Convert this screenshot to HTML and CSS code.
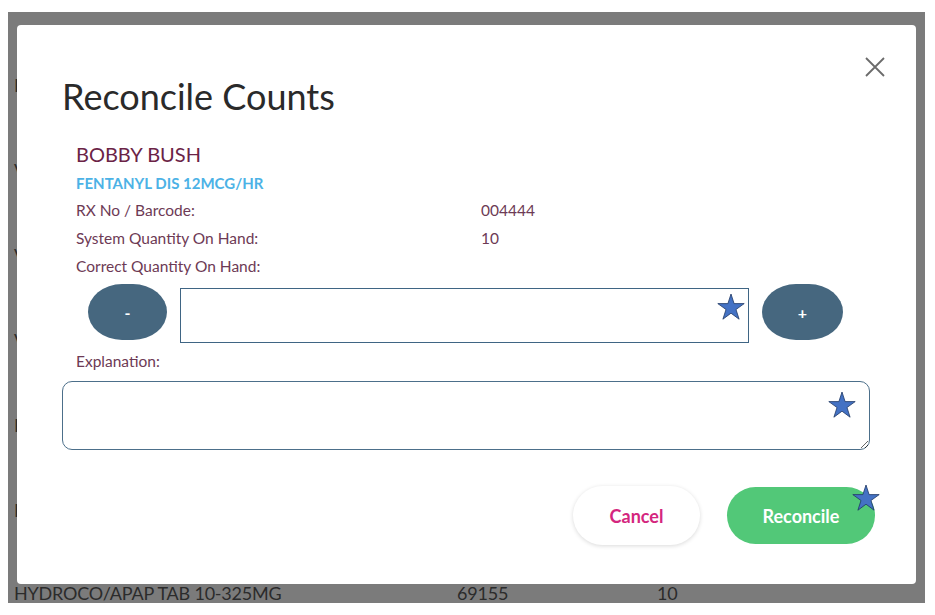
FILE: index.html
```html
<!DOCTYPE html>
<html>
<head>
  <meta charset="UTF-8">
  <title>Reconcile Counts</title>
  <link rel="stylesheet" href="styles.css">
</head>
<body>
  <div class="page">
    <div class="inventory-list">
      <div class="inventory-row"><span class="col-name">F</span></div>
      <div class="inventory-row"><span class="col-name">V</span></div>
      <div class="inventory-row"><span class="col-name">V</span></div>
      <div class="inventory-row"><span class="col-name">V</span></div>
      <div class="inventory-row"><span class="col-name">H</span></div>
      <div class="inventory-row"><span class="col-name">F</span></div>
      <div class="inventory-row last">
        <span class="col-name">HYDROCO/APAP TAB 10-325MG</span>
        <span class="col-rx">69155</span>
        <span class="col-qty">10</span>
      </div>
    </div>

    <div class="modal">
      <button class="close-btn" aria-label="Close">
        <svg width="20" height="20" viewBox="0 0 20 20">
          <path d="M1 1 L19 19 M19 1 L1 19" stroke="#6b6b6b" stroke-width="1.8" fill="none"/>
        </svg>
      </button>

      <h2 class="modal-title">Reconcile Counts</h2>

      <div class="details">
        <div class="patient-name">BOBBY BUSH</div>
        <div class="drug-name">FENTANYL DIS 12MCG/HR</div>
        <div class="info-row">
          <span class="info-label">RX No / Barcode:</span>
          <span class="info-value">004444</span>
        </div>
        <div class="info-row">
          <span class="info-label">System Quantity On Hand:</span>
          <span class="info-value">10</span>
        </div>
        <div class="info-row">
          <span class="info-label">Correct Quantity On Hand:</span>
        </div>
      </div>

      <div class="qty-row">
        <button class="step-btn">-</button>
        <div class="qty-field">
          <input type="text" class="qty-input">
          <svg class="star star-input" width="28" height="28" viewBox="0 0 28 28">
            <polygon points="14,1 17.1,10.6 27.2,10.6 19,16.5 22.1,26.2 14,20.2 5.9,26.2 9,16.5 0.8,10.6 10.9,10.6" fill="#4472c4" stroke="#1f3864" stroke-width="0.8"/>
          </svg>
        </div>
        <button class="step-btn">+</button>
      </div>

      <div class="explain-label">Explanation:</div>
      <div class="explain-field">
        <textarea class="explain-input"></textarea>
        <svg class="star star-textarea" width="28" height="28" viewBox="0 0 28 28">
          <polygon points="14,1 17.1,10.6 27.2,10.6 19,16.5 22.1,26.2 14,20.2 5.9,26.2 9,16.5 0.8,10.6 10.9,10.6" fill="#4472c4" stroke="#1f3864" stroke-width="0.8"/>
        </svg>
      </div>

      <div class="modal-footer">
        <button class="btn-cancel">Cancel</button>
        <div class="reconcile-wrap">
          <button class="btn-reconcile">Reconcile</button>
          <svg class="star star-button" width="28" height="28" viewBox="0 0 28 28">
            <polygon points="14,1 17.1,10.6 27.2,10.6 19,16.5 22.1,26.2 14,20.2 5.9,26.2 9,16.5 0.8,10.6 10.9,10.6" fill="#4472c4" stroke="#1f3864" stroke-width="0.8"/>
          </svg>
        </div>
      </div>
    </div>
  </div>
</body>
</html>
```

FILE: styles.css
```css
* {
  box-sizing: border-box;
}
body {
  margin: 0;
  background: #fff;
  font-family: Lato, 'Open Sans', 'Liberation Sans', sans-serif;
}
.page {
  position: relative;
  margin: 12px 10px 0 8px;
  height: 591px;
  background: #7b7b7b;
  overflow: hidden;
}

/* list behind the dialog */
.inventory-list {
  padding-top: 30px;
  color: #2b2b2b;
  font-size: 18px;
}
.inventory-row {
  height: 85px;
  display: flex;
  align-items: center;
  padding-left: 6px;
}
.inventory-row.last {
  height: 40px;
  margin-top: 21px;
  letter-spacing: -0.2px;
}
.col-name {
  width: 443px;
}
.col-rx {
  width: 200px;
}

/* dialog */
.modal {
  position: absolute;
  left: 9px;
  top: 13px;
  width: 899px;
  height: 559px;
  background: #fff;
  border-radius: 4px;
  padding: 0 46px 0 45px;
}
.close-btn {
  position: absolute;
  top: 32px;
  right: 31px;
  width: 20px;
  height: 20px;
  padding: 0;
  border: none;
  background: none;
}
.modal-title {
  margin: 50px 0 0 0;
  font-size: 36px;
  font-weight: 400;
  line-height: 43px;
  color: #2a2a2a;
}
.details {
  padding-left: 14px;
  margin-top: 23px;
  color: #6d3a55;
}
.patient-name {
  font-size: 20px;
  line-height: 26px;
  color: #6b2346;
}
.drug-name {
  font-size: 15px;
  font-weight: 700;
  line-height: 22px;
  margin: 5px 0 2px;
  color: #4cb2e6;
}
.info-row {
  display: flex;
  height: 28px;
  align-items: center;
  font-size: 15.5px;
}
.info-label {
  width: 405px;
}

.qty-row {
  display: flex;
  align-items: flex-start;
  gap: 13px;
  margin-top: 4px;
  padding-left: 26px;
}
.step-btn {
  width: 79px;
  height: 56px;
  border: none;
  border-radius: 34px / 28px;
  background: #46677f;
  color: #fff;
  font-family: Lato, sans-serif;
  font-size: 16px;
  font-weight: 700;
}
.step-btn:last-child {
  width: 81px;
}
.qty-field {
  position: relative;
  margin-top: 4px;
}
.qty-input {
  display: block;
  width: 569px;
  height: 55px;
  border: 1px solid #3f6584;
  border-radius: 0;
}
.star {
  position: absolute;
}
.star-input {
  top: 5px;
  right: 4px;
}

.explain-label {
  margin: 8px 0 0 14px;
  font-size: 15.5px;
  line-height: 20px;
  color: #6d3a55;
}
.explain-field {
  position: relative;
  margin-top: 10px;
}
.explain-input {
  display: block;
  width: 808px;
  height: 69px;
  border: 1px solid #4c6f8a;
  border-radius: 10px;
  resize: vertical;
}
.star-textarea {
  top: 10px;
  right: 14px;
}

.modal-footer {
  display: flex;
  justify-content: flex-end;
  align-items: flex-start;
  gap: 27px;
  margin-top: 36px;
  margin-right: -5px;
}
.btn-cancel {
  width: 127px;
  height: 59px;
  border: none;
  border-radius: 30px;
  background: #fff;
  box-shadow: 0 1px 4px rgba(0,0,0,0.15);
  color: #d4267e;
  font-family: Lato, sans-serif;
  font-size: 18px;
  font-weight: 700;
}
.reconcile-wrap {
  position: relative;
  margin-top: 1px;
}
.btn-reconcile {
  display: block;
  width: 148px;
  height: 57px;
  border: none;
  border-radius: 29px;
  background: #52c878;
  color: #fff;
  font-family: Lato, sans-serif;
  font-size: 18px;
  font-weight: 700;
}
.star-button {
  top: -3px;
  right: -5px;
}
```
